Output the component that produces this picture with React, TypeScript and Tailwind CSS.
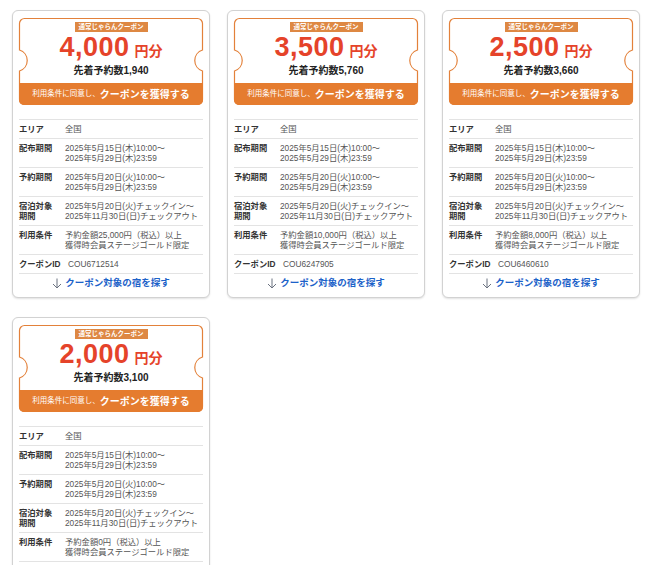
import React from "react";

type Coupon = { amount: string; stock: string; min: string; id: string };

const coupons: Coupon[] = [
  { amount: "4,000", stock: "1,940", min: "25,000", id: "COU6712514" },
  { amount: "3,500", stock: "5,760", min: "10,000", id: "COU6247905" },
  { amount: "2,500", stock: "3,660", min: "8,000", id: "COU6460610" },
  { amount: "2,000", stock: "3,100", min: "0", id: "COU6538917" },
];

const font = { fontFamily: '"Liberation Sans", "Noto Sans CJK JP", sans-serif' };

// ticket outline with the two half-round notches
function TicketOutline() {
  const w = 183, h = 86, r = 5, cy = 42, n = 10.5, R = 11;
  const d = `M ${r} 0 H ${w - r} A ${r} ${r} 0 0 1 ${w} ${r} V ${cy - n} A ${R} ${R} 0 0 0 ${w} ${cy + n} V ${h - r} A ${r} ${r} 0 0 1 ${w - r} ${h} H ${r} A ${r} ${r} 0 0 1 0 ${h - r} V ${cy + n} A ${R} ${R} 0 0 0 0 ${cy - n} V ${r} A ${r} ${r} 0 0 1 ${r} 0 Z`;
  return (
    <svg className="absolute left-0 top-0 overflow-visible" width="184" height="87" viewBox="-0.5 -0.5 184 87">
      <path d={d} fill="white" stroke="#e3813a" strokeWidth="1.2" />
    </svg>
  );
}

function Row({ label, children }: { label: React.ReactNode; children: React.ReactNode }) {
  return (
    <div className="flex border-t border-[#e3e3e3] py-[4px] text-[8.3px] leading-[10px]">
      <div className="w-[46px] shrink-0 font-bold text-[#333] whitespace-nowrap">{label}</div>
      <div className="text-[#555] whitespace-nowrap">{children}</div>
    </div>
  );
}

function CouponCard({ c }: { c: Coupon }) {
  return (
    <div className="w-[198px] rounded-[6px] border border-[#d2d2d2] bg-white px-[6px] pt-[7px] pb-[4px] shadow-[0_1px_2px_rgba(0,0,0,0.12)]">
      <div className="relative h-[87px] w-[184px]">
        <TicketOutline />
        <div className="relative flex h-full flex-col items-center">
          <div className="mt-[4px] bg-[#de8843] px-[4px] text-[6.5px] leading-[10px] font-bold text-white">通常じゃらんクーポン</div>
          <div className="mt-[2px] flex items-baseline text-[#e5432a] font-bold">
            <span className="text-[27px] leading-[26px] tracking-[0.5px]">{c.amount}</span>
            <span className="ml-[5px] text-[14px] leading-[14px]">円分</span>
          </div>
          <div className="mt-[5px] text-[10px] leading-[12px] font-bold text-[#222]">先着予約数{c.stock}</div>
          <div className="mt-auto flex h-[22px] w-full items-center justify-center rounded-b-[5px] bg-[#e57c2f] text-white">
            <span className="text-[7.5px]">利用条件に同意し、</span>
            <span className="text-[10px] font-bold">クーポンを獲得する</span>
          </div>
        </div>
      </div>
      <div className="mt-[14px]">
        <Row label="エリア">全国</Row>
        <Row label="配布期間">2025年5月15日(木)10:00～<br />2025年5月29日(木)23:59</Row>
        <Row label="予約期間">2025年5月20日(火)10:00～<br />2025年5月29日(木)23:59</Row>
        <Row label={<>宿泊対象<br />期間</>}>2025年5月20日(火)チェックイン～<br />2025年11月30日(日)チェックアウト</Row>
        <Row label="利用条件">予約金額{c.min}円（税込）以上<br />獲得時会員ステージゴールド限定</Row>
        <Row label="クーポンID"><span className="ml-[3px]">{c.id}</span></Row>
        <div className="flex h-[20px] items-center justify-center border-t border-[#e3e3e3]">
          <svg width="10" height="11" viewBox="0 0 10 11" className="mr-[3px]">
            <path d="M5 0.5 V10 M1 6 L5 10 L9 6" fill="none" stroke="#6b7280" strokeWidth="1" />
          </svg>
          <span className="text-[9.5px] font-bold text-[#1c62c9]">クーポン対象の宿を探す</span>
        </div>
      </div>
    </div>
  );
}

export default function App() {
  return (
    <div className="h-[565px] w-[650px] overflow-hidden bg-white" style={font}>
      <div className="grid grid-cols-[198px_198px_198px] gap-x-[17px] gap-y-[19px] pl-[12px] pt-[10px]">
        {coupons.map((c) => (
          <CouponCard key={c.id} c={c} />
        ))}
      </div>
    </div>
  );
}
